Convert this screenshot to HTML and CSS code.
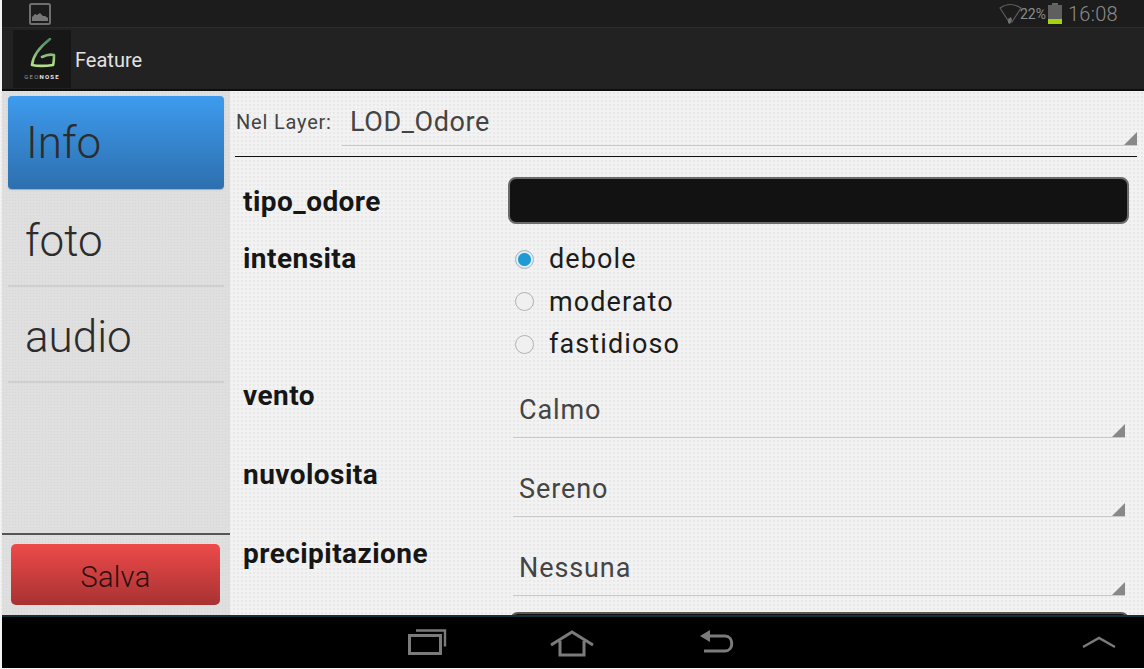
FILE: index.html
```html
<!DOCTYPE html>
<html lang="it">
<head>
  <meta charset="UTF-8" />
  <meta name="viewport" content="width=device-width, initial-scale=1.0"/>
  <title>Feature</title>
  <link rel="stylesheet" href="styles.css">
</head>
<body>
  <div class="screen">
    <div class="status-bar">
      <svg class="notif-icon" width="22" height="22" viewBox="0 0 22 22">
        <rect x="1" y="1" width="20" height="20" rx="1.5" fill="none" stroke="#6f6f6f" stroke-width="2"/>
        <path d="M3 18v-4l3-3 2 1 3-2 3 3 2 0 3 2v3z" fill="#777"/>
      </svg>
      <div class="status-right">
        <svg width="24" height="24" viewBox="0 0 24 24">
          <path d="M1 6q10-7 21 0l-9 14h-3z" fill="none" stroke="#5c5c5c" stroke-width="1.2"/>
          <path d="M9 17l3-2 1 3-2 4-2-1z" fill="#707070"/>
        </svg>
        <span class="battery-pct">22%</span>
        <div class="battery"><div class="battery-cap"></div><div class="battery-body"><div class="battery-level"></div></div></div>
        <span class="clock">16:08</span>
      </div>
    </div>

    <div class="action-bar">
      <div class="logo">
        <svg width="38" height="36" viewBox="0 0 38 36">
          <defs>
            <linearGradient id="logo-grad" x1="0" y1="0" x2="0" y2="1">
              <stop offset="0" stop-color="#4f8a62"/>
              <stop offset="1" stop-color="#b4e08a"/>
            </linearGradient>
          </defs>
          <path d="M27 1C18 8 10 17 9 27c5 1 14 1 21 0 1-3 1-6 1-10-4-1-8 0-12 2" fill="none" stroke="url(#logo-grad)" stroke-width="2.6" stroke-linecap="round" stroke-linejoin="round"/>
        </svg>
        <div class="logo-text">GEO<b>NOSE</b></div>
      </div>
      <span class="app-title">Feature</span>
    </div>

    <div class="main">
      <div class="sidebar">
        <div class="tabs">
          <div class="tab active">Info</div>
          <div class="tab">foto</div>
          <div class="tab">audio</div>
        </div>
        <div class="save-box">
          <button class="btn-salva">Salva</button>
        </div>
      </div>

      <div class="content">
        <div class="layer-row">
          <span class="layer-label">Nel Layer:</span>
          <div class="spinner layer-spinner">LOD_Odore</div>
        </div>

        <div class="form">
          <div class="row row-tipo">
            <div class="label">tipo_odore</div>
            <div class="text-field"></div>
          </div>
          <div class="row row-intensita">
            <div class="label">intensita</div>
            <div class="radios">
              <div class="radio-item"><span class="radio checked"></span>debole</div>
              <div class="radio-item"><span class="radio"></span>moderato</div>
              <div class="radio-item"><span class="radio"></span>fastidioso</div>
            </div>
          </div>
          <div class="row row-spin">
            <div class="label">vento</div>
            <div class="spinner">Calmo</div>
          </div>
          <div class="row row-spin">
            <div class="label">nuvolosita</div>
            <div class="spinner">Sereno</div>
          </div>
          <div class="row row-spin">
            <div class="label">precipitazione</div>
            <div class="spinner">Nessuna</div>
          </div>
          <div class="row">
            <div class="label"></div>
            <div class="text-field cut"></div>
          </div>
        </div>
      </div>
    </div>

    <div class="nav-bar">
      <div class="nav-buttons">
        <svg width="40" height="32" viewBox="0 0 40 32">
          <path d="M1.5 8.5h31v18h-31z" fill="none" stroke="#7b7b7b" stroke-width="3"/>
          <path d="M8 3.5h29v16" fill="none" stroke="#7b7b7b" stroke-width="2.4"/>
        </svg>
        <svg width="46" height="28" viewBox="0 0 46 28">
          <path d="M2 16L23 3l21 13M11 12v14h24V12" fill="none" stroke="#7b7b7b" stroke-width="3"/>
        </svg>
        <svg class="nav-back" width="36" height="28" viewBox="0 0 36 28">
          <path d="M1 7l10-6v12z" fill="#7b7b7b"/>
          <path d="M9 7h17c9 0 9 15 0 15H5" fill="none" stroke="#7b7b7b" stroke-width="3"/>
        </svg>
      </div>
      <svg class="nav-up" width="34" height="14" viewBox="0 0 34 14">
        <path d="M1 12L17 3l16 9" fill="none" stroke="#7b7b7b" stroke-width="2.4"/>
      </svg>
    </div>
  </div>
</body>
</html>
```

FILE: styles.css
```css
* {
  box-sizing: border-box;
}

html, body {
  margin: 0;
  height: 669px;
  overflow: hidden;
  background: #f4f4f4;
}

body {
  font-family: Roboto, "Liberation Sans", sans-serif;
  color: #222;
}

.screen {
  display: flex;
  flex-direction: column;
  width: 1144px;
  height: 668px;
}

/* top bars */
.status-bar {
  display: flex;
  justify-content: space-between;
  align-items: center;
  height: 28px;
  padding: 0 26px 0 27px;
  margin-left: 2px;
  background: #1c1c1c;
  border-bottom: 1px solid #2a2a2a;
}

.status-right {
  display: flex;
  align-items: center;
  color: #8c8c8c;
}

.status-right svg {
  margin-right: -3px;
}

.battery-pct {
  font-size: 14px;
  margin-right: 2px;
}

.battery {
  display: flex;
  flex-direction: column;
  align-items: center;
  width: 14px;
  margin-right: 6px;
}

.battery-cap {
  width: 6px;
  height: 2px;
  background: #666;
}

.battery-body {
  display: flex;
  align-items: flex-end;
  width: 14px;
  height: 19px;
  background: #5f5f5f;
}

.battery-level {
  width: 100%;
  height: 5px;
  background: #a4d40c;
}

.clock {
  font-size: 20px;
  font-weight: 300;
  letter-spacing: 0.3px;
}

.action-bar {
  display: flex;
  align-items: center;
  height: 63px;
  margin-left: 2px;
  padding-left: 11px;
  background: #222;
  border-bottom: 2px solid #0d0d0d;
}

.logo {
  display: flex;
  flex-direction: column;
  align-items: center;
  width: 58px;
  height: 58px;
  padding-top: 8px;
  background: #171717;
}

.logo-text {
  margin-top: -1px;
  font-size: 6px;
  letter-spacing: 1.2px;
  color: #9a9a9a;
}

.logo-text b {
  color: #e8e8e8;
}

.app-title {
  margin-left: 4px;
  padding-top: 2px;
  font-size: 20px;
  color: #e2e2e2;
}

/* main area */
.main {
  display: flex;
  flex: 1;
  min-height: 0;
  padding-left: 2px;
  background-color: #f2f2f2;
  background-image: radial-gradient(#e8e8e8 1px, transparent 1px);
  background-size: 4px 4px;
}

.sidebar {
  display: flex;
  flex-direction: column;
  width: 228px;
  background-color: #dfdfdf;
  background-image: radial-gradient(#d6d6d6 1px, transparent 1px);
  background-size: 3px 3px;
}

.tabs {
  flex: 1;
  padding-top: 5px;
}

.tab {
  display: flex;
  align-items: center;
  height: 96px;
  margin: 0 6px;
  padding: 5px 0 0 17px;
  font-size: 44px;
  font-weight: 300;
  color: #2c2c2c;
  border-bottom: 2px solid #cfcfcf;
}

.tab:first-child {
  height: 93px;
  margin-bottom: 2px;
  padding: 0 0 0 18px;
  border-bottom: none;
  border-radius: 4px;
  background: linear-gradient(#3e9bee, #2d6fae);
  box-shadow: 0 1px 1px rgba(0, 0, 0, 0.25);
}

.save-box {
  height: 82px;
  padding: 9px 10px 0 9px;
  border-top: 2px solid #555;
}

.btn-salva {
  display: block;
  width: 100%;
  height: 61px;
  padding-top: 5px;
  font-family: inherit;
  font-size: 29px;
  font-weight: 300;
  letter-spacing: 0.3px;
  color: #2a1010;
  border: none;
  border-radius: 5px;
  background: linear-gradient(#ee4a4a, #a83232);
}

.content {
  flex: 1;
  min-width: 0;
  overflow: hidden;
  padding-left: 5px;
}

.layer-row {
  display: flex;
  align-items: flex-start;
  width: 902px;
  height: 66px;
  padding-top: 6px;
  border-bottom: 1px solid #111;
}

.layer-label {
  flex: none;
  width: 107px;
  margin-top: 13px;
  padding-left: 1px;
  font-size: 20px;
  letter-spacing: 0.8px;
  color: #444;
}

.form {
  padding: 0 0 0 8px;
}

.row {
  display: flex;
}

.label {
  width: 266px;
  flex: none;
  font-size: 28px;
  font-weight: 700;
  letter-spacing: 0.45px;
  color: #161616;
}

.row-tipo {
  align-items: center;
  height: 47px;
  margin-top: 20px;
}

.row-tipo .label {
  padding-top: 2px;
}

.text-field {
  width: 621px;
  height: 47px;
  margin-left: -1px;
  background: #121212;
  border: 2px solid #6b6b6b;
  border-radius: 8px;
}

.text-field.cut {
  width: 619px;
  height: 20px;
  margin: 1px 0 0 1px;
  border-color: #5a5a50;
}

.row-intensita {
  margin-top: 18px;
  height: 132px;
}

.radios {
  margin-top: -4px;
}

.radio-item {
  display: flex;
  align-items: center;
  height: 42.5px;
  margin-left: 6px;
  font-size: 27px;
  letter-spacing: 1.1px;
  color: #1c1c1c;
}

.radio {
  width: 19px;
  height: 19px;
  margin-right: 15px;
  border: 1.5px solid #b2b2b2;
  border-radius: 50%;
  background: #f0f0f0;
}

.radio.checked {
  border-color: #a4b4bc;
  background: radial-gradient(circle, #1f9ad4 0 6px, #dfeef5 7px);
}

.row-spin {
  height: 79px;
  padding-top: 5px;
}

.spinner {
  position: relative;
  flex: none;
  width: 612px;
  height: 59px;
  margin-left: 4px;
  padding: 15px 0 0 6px;
  font-size: 27px;
  letter-spacing: 0.9px;
  color: #444;
  border-bottom: 1px solid #c8c8c8;
}

/* little corner triangle of the android spinner */
.spinner::after {
  content: "";
  position: absolute;
  right: 0;
  bottom: 0;
  border-style: solid;
  border-width: 0 0 13px 13px;
  border-color: transparent transparent #888 transparent;
}

.layer-spinner {
  width: 795px;
  height: 49px;
  margin-left: 0;
  padding: 9px 0 0 8px;
  letter-spacing: 0.6px;
}

/* bottom nav */
.nav-bar {
  position: relative;
  display: flex;
  justify-content: center;
  align-items: center;
  height: 53px;
  flex: none;
  margin-left: 2px;
  background: #000;
  border-top: 2px solid #13303c;
}

.nav-buttons {
  display: flex;
  align-items: center;
  gap: 101px;
  margin-left: -6px;
}

.nav-back {
  margin-left: 3px;
  margin-right: -3px;
}

.nav-up {
  position: absolute;
  right: 28px;
  top: 18px;
}
```
